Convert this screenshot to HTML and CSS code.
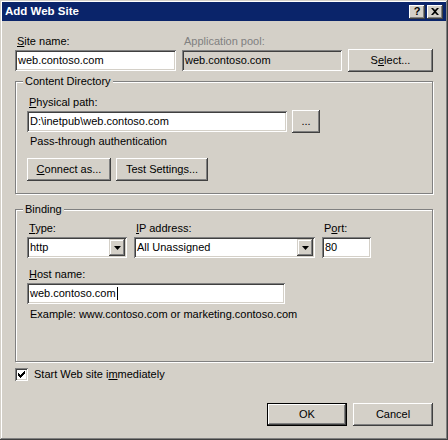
FILE: index.html
```html
<!DOCTYPE html>
<html lang="en">
<head>
    <meta charset="UTF-8">
    <title>Add Web Site</title>
    <link rel="stylesheet" href="styles.css">
</head>
<body>
    <div class="window">
        <div class="titlebar">
            <span class="caption">Add Web Site</span>
            <div class="caption-btns">
                <span class="cbtn help">?</span>
                <span class="cbtn close">
                    <svg width="8" height="7" viewBox="0 0 8 7"><path d="M0 0h2l2 2 2-2h2L5 3.5 8 7H6L4 5 2 7H0l3-3.5z"/></svg>
                </span>
            </div>
        </div>

        <div class="body">
            <div class="top-row">
                <span class="lbl"><u>S</u>ite name:</span>
                <span class="lbl disabled">Application pool:</span>
                <span></span>
                <div class="field">web.contoso.com</div>
                <div class="field readonly">web.contoso.com</div>
                <button class="btn">S<u>e</u>lect...</button>
            </div>

            <fieldset class="group first">
                <legend>Content Directory</legend>
                <span class="lbl"><u>P</u>hysical path:</span>
                <div class="path-row">
                    <div class="field path">D:\inetpub\web.contoso.com</div>
                    <button class="btn browse">...</button>
                </div>
                <p class="note">Pass-through authentication</p>
                <div class="btn-row">
                    <button class="btn wide"><u>C</u>onnect as...</button>
                    <button class="btn wider">Test Settin<u>g</u>s...</button>
                </div>
            </fieldset>

            <fieldset class="group second">
                <legend>Binding</legend>
                <div class="bind-row">
                    <span class="lbl"><u>T</u>ype:</span>
                    <span class="lbl"><u>I</u>P address:</span>
                    <span class="lbl">P<u>o</u>rt:</span>
                    <div class="combo">
                        <span class="combo-text">http</span>
                        <span class="drop"><svg width="7" height="4" viewBox="0 0 7 4"><path d="M0 0h7L3.5 4z"/></svg></span>
                    </div>
                    <div class="combo">
                        <span class="combo-text">All Unassigned</span>
                        <span class="drop"><svg width="7" height="4" viewBox="0 0 7 4"><path d="M0 0h7L3.5 4z"/></svg></span>
                    </div>
                    <div class="field">80</div>
                </div>
                <span class="lbl host-lbl"><u>H</u>ost name:</span>
                <div class="field host">web.contoso.com<span class="caret"></span></div>
                <p class="note example">Example: www.contoso.com or marketing.contoso.com</p>
            </fieldset>

            <div class="check-row">
                <span class="checkbox">
                    <svg width="7" height="7" viewBox="0 0 7 7"><path d="M0 2h1v1h1v1h1V3h1V2h1V1h1V0h1v3H6v1H5v1H4v1H3v1H2V6H1V5H0z"/></svg>
                </span>
                <span>Start Web site i<u>m</u>mediately</span>
            </div>

            <div class="actions">
                <button class="btn dialog default">OK</button>
                <button class="btn dialog">Cancel</button>
            </div>
        </div>
    </div>
</body>
</html>
```

FILE: styles.css
```css
* {
    margin: 0;
    padding: 0;
    box-sizing: border-box;
}
body {
    background: #d4d0c8;
    font-family: "Liberation Sans", Arial, sans-serif;
    font-size: 11px;
    line-height: 13px;
    color: #000;
}
.window {
    width: 448px;
    height: 440px;
    padding: 2px;
    background: #d4d0c8;
    box-shadow: inset -1px -1px #404040, inset 1px 1px #d4d0c8,
                inset -2px -2px #808080, inset 2px 2px #fff;
}

/* title bar */
.titlebar {
    height: 19px;
    display: flex;
    align-items: center;
    justify-content: space-between;
    padding: 0 3px 0 3px;
    background: #0a246a;
}
.caption {
    color: #fff;
    font-weight: bold;
    font-size: 11.5px;
}
.caption-btns {
    display: flex;
    gap: 2px;
}
.cbtn {
    width: 16px;
    height: 14px;
    display: flex;
    justify-content: center;
    align-items: center;
    background: #d4d0c8;
    font-weight: bold;
    font-size: 11px;
    box-shadow: inset -1px -1px #404040, inset 1px 1px #fff,
                inset -2px -2px #808080;
}

/* dialog body */
.body {
    padding: 14px 13px 0 13px;
}
.lbl {
    display: block;
    padding-left: 2px;
}
.lbl.disabled {
    color: #808080;
}
u {
    text-decoration: underline;
    text-underline-offset: 1px;
}

.field {
    height: 21px;
    padding: 0 3px;
    line-height: 21px;
    background: #fff;
    white-space: nowrap;
    overflow: hidden;
    box-shadow: inset 1px 1px #808080, inset -1px -1px #fff,
                inset 2px 2px #404040, inset -2px -2px #d4d0c8;
}
.field.readonly {
    background: #d4d0c8;
}

.btn {
    height: 23px;
    border: none;
    background: #d4d0c8;
    font: inherit;
    color: #000;
    box-shadow: inset -1px -1px #404040, inset 1px 1px #fff,
                inset -2px -2px #808080, inset 2px 2px #d4d0c8;
}
.btn.default {
    border: 1px solid #000;
}

.top-row {
    display: grid;
    grid-template-columns: 161px 160px 85px;
    column-gap: 6px;
    row-gap: 2px;
}
.top-row .btn {
    margin: -1px 0;
}

/* group boxes */
.group {
    border: 1px solid #808080;
    box-shadow: inset 1px 1px #fff, 1px 1px #fff;
    padding: 0 10px 11px 11px;
    min-width: 0;
}
.group legend {
    padding: 0 2px;
    margin-left: -4px;
    background: #d4d0c8;
}
.group.first {
    margin-top: 4px;
    padding-top: 8px;
    padding-bottom: 12px;
}
.group.second {
    margin-top: 9px;
    padding-top: 6px;
    padding-bottom: 40px;
}

.path-row {
    display: flex;
    align-items: center;
    gap: 5px;
    margin-top: 2px;
}
.field.path {
    width: 260px;
}
.btn.browse {
    width: 28px;
    margin: -1px 0;
}
.note {
    margin-top: 3px;
    padding-left: 3px;
}
.btn-row {
    display: flex;
    gap: 5px;
    margin-top: 10px;
}
.btn.wide {
    width: 84px;
}
.btn.wider {
    width: 92px;
}

.bind-row {
    display: grid;
    grid-template-columns: 100px 181px 49px;
    column-gap: 7px;
    row-gap: 2px;
}
.combo {
    height: 21px;
    display: flex;
    align-items: stretch;
    padding: 2px;
    background: #fff;
    box-shadow: inset 1px 1px #808080, inset -1px -1px #fff,
                inset 2px 2px #404040, inset -2px -2px #d4d0c8;
}
.combo-text {
    flex: 1;
    padding-left: 1px;
    line-height: 17px;
}
.drop {
    width: 16px;
    display: flex;
    justify-content: center;
    align-items: center;
    background: #d4d0c8;
    box-shadow: inset -1px -1px #404040, inset 1px 1px #d4d0c8,
                inset -2px -2px #808080, inset 2px 2px #fff;
}
.host-lbl {
    margin-top: 10px;
    margin-bottom: 2px;
}
.field.host {
    width: 258px;
}
.caret {
    display: inline-block;
    width: 1px;
    height: 13px;
    margin-left: 1px;
    vertical-align: -3px;
    background: #000;
}
.note.example {
    margin-top: 4px;
}

/* bottom */
.check-row {
    display: flex;
    align-items: center;
    gap: 6px;
    margin-top: 6px;
}
.checkbox {
    width: 13px;
    height: 13px;
    display: flex;
    justify-content: center;
    align-items: center;
    background: #fff;
    box-shadow: inset 1px 1px #808080, inset -1px -1px #fff,
                inset 2px 2px #404040, inset -2px -2px #d4d0c8;
}
.actions {
    display: flex;
    justify-content: flex-end;
    gap: 6px;
    margin-top: 22px;
}
.btn.dialog {
    width: 80px;
}
```
